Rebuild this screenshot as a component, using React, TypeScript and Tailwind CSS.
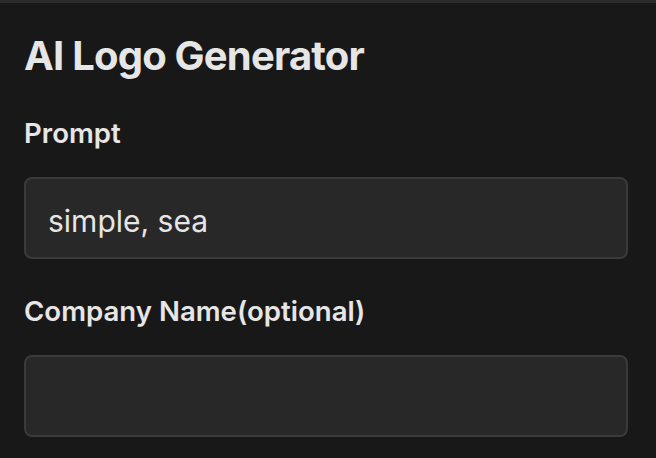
import { useState } from "react";

const App = () => {
    const [prompt, setPrompt] = useState("simple, sea");
    const [company, setCompany] = useState("");

    return (
        <div className="min-h-screen w-full bg-[#181818] border-t-[3px] border-[#2b2b2b] font-['Inter',sans-serif] text-[#e6e6e6]">
            <div className="pl-6 pr-7 pt-[33px] flex flex-col">
                {/* Title */}
                <h1 className="text-[40px] leading-none font-bold tracking-[-0.02em]">AI Logo Generator</h1>

                {/* Prompt */}
                <label className="mt-[44px] text-[27.6px] leading-none font-semibold">Prompt</label>
                <input
                    value={prompt}
                    onChange={(e) => setPrompt(e.target.value)}
                    className="mt-[29px] h-[82px] w-full rounded-lg border-2 border-[#3a3a3a] bg-[#282828] pl-[22px] pr-6 pt-[6px] text-[30px] text-[#e6e6e6] outline-none"
                />

                {/* Company name */}
                <label className="mt-[39px] text-[27.6px] leading-none font-semibold">Company Name(optional)</label>
                <input
                    value={company}
                    onChange={(e) => setCompany(e.target.value)}
                    className="mt-[30px] h-[82px] w-full rounded-lg border-2 border-[#3a3a3a] bg-[#282828] pl-[22px] pr-6 text-[30px] text-[#e6e6e6] outline-none"
                />
            </div>
        </div>
    );
};

export default App;
